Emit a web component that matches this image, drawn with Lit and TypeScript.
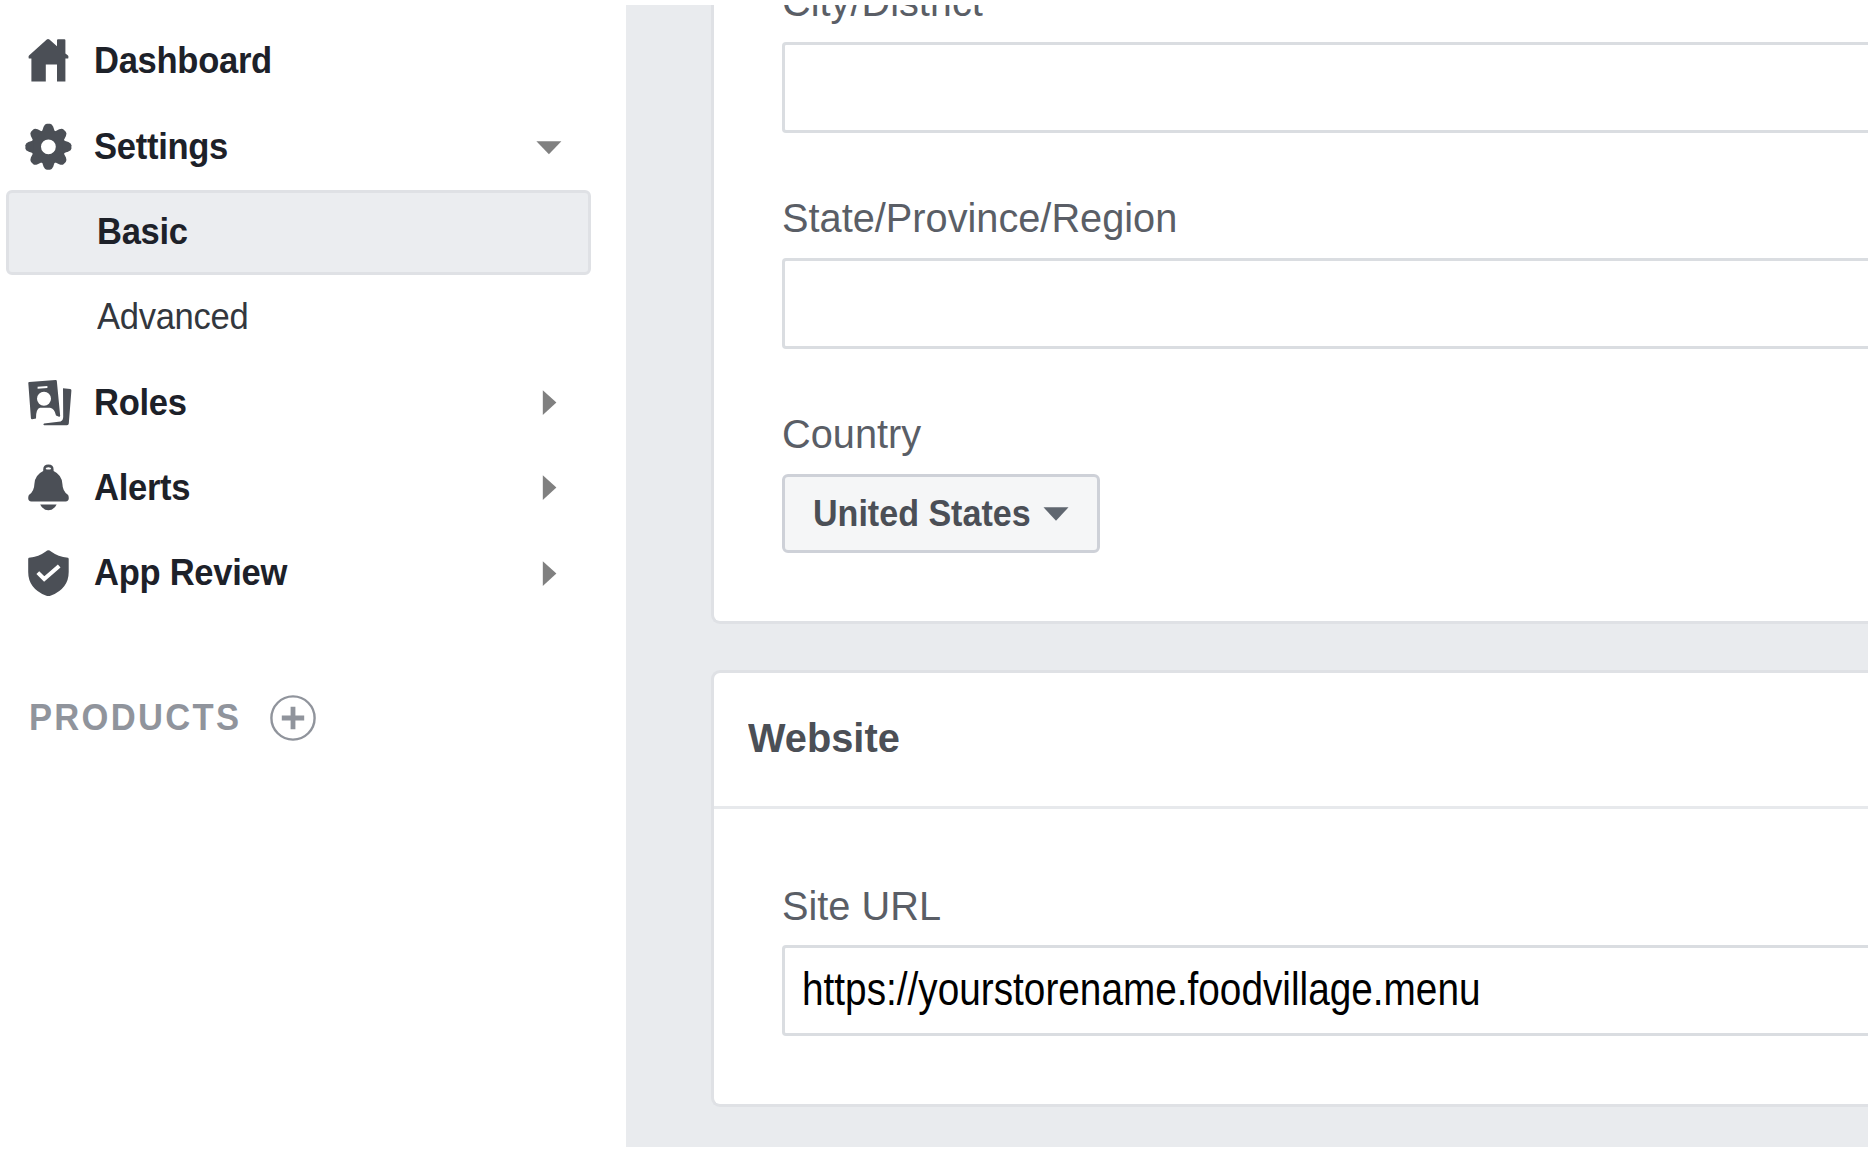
import { LitElement, html, css, svg, nothing, type SVGTemplateResult } from "lit";
import { customElement, property } from "lit/decorators.js";
import { classMap } from "lit/directives/class-map.js";

type Arrow = "down" | "right" | "none";

interface NavItem {
  id: string;
  label: string;
  icon?: string;
  arrow?: Arrow;
  selected?: boolean;
}

const NAV: NavItem[] = [
  { id: "dashboard", label: "Dashboard", icon: "home" },
  { id: "settings", label: "Settings", icon: "gear", arrow: "down" },
  { id: "basic", label: "Basic", selected: true },
  { id: "advanced", label: "Advanced" },
  { id: "roles", label: "Roles", icon: "badge", arrow: "right" },
  { id: "alerts", label: "Alerts", icon: "bell", arrow: "right" },
  { id: "review", label: "App Review", icon: "shield", arrow: "right" },
];

const TEETH = [0, 45, 90, 135, 180, 225, 270, 315];

const ICONS: Record<string, SVGTemplateResult> = {
  home: svg`<path d="M26 3 q.8 0 1.4 .5 L35 10.2 V4.3 q0-1 1-1 H42.4 q1 0 1 1 V17.4 L46 19.6 q.9 1 .2 3 H43.4 V45.4 H35 V28.4 H23.8 V45.4 H9.4 V22.6 H6.8 q-.7-2 .2-3 L24.8 3.4 q.6-.4 1.2-.4Z"/>`,
  gear: svg`<g transform="translate(26.4 25.8)">
      <path fill-rule="evenodd" d="M0-17.2 A17.2 17.2 0 1 1 0 17.2 A17.2 17.2 0 1 1 0-17.2Z M0-7.4 A7.4 7.4 0 1 0 0 7.4 A7.4 7.4 0 1 0 0-7.4Z"/>
      ${TEETH.map((a) => svg`<path transform=${`rotate(${a})`} d="M-6.6-14.5 L-4.8-20 Q-3.4-23-1.6-23 H1.6 Q3.4-23 4.8-20 L6.6-14.5Z"/>`)}
    </g>`,
  badge: svg`<path fill-rule="evenodd" d="M6.3 6 Q6.3 5.2 7.2 5.1 L33.6 2.9 Q34.6 2.8 34.8 3.8 L38.2 39 Q38 40 37 39.8 L34 38.5 Q32.5 31.5 28 30.8 H18 Q13.8 32 14 41.5 L10.2 42.3 Q9 42.4 8.9 41Z M15.6 9.8 L25.4 9 V10.9 L15.6 11.7Z M22 14.8 A7 7 0 1 0 22 28.8 A7 7 0 1 0 22 14.8Z"/>
    <path d="M41 11.2 L48.2 12 Q49.5 12.2 49.4 13.5 L46.8 46.6 Q46.6 48.2 45 48.2 H22 Q20.6 47.6 22 46.6 L38.6 44.4 Q41 43.6 41.2 40Z"/>`,
  bell: svg`<path fill-rule="evenodd" d="M21.2 7.4 Q21.2 2.4 26.4 2.4 Q31.6 2.4 31.6 7.4 V9 Q40 13 40.4 22 Q40.6 29 45.6 32.6 Q46.8 33.6 46.8 36 Q46.8 39.4 43.6 39.4 H9.4 Q6.2 39.4 6.2 36 Q6.2 33.6 7.4 32.6 Q12.2 29 12.4 22 Q12.8 13 21.2 9Z M26.4 5.2 Q23.6 5.2 23.6 7 Q26.4 8.2 29.2 7 Q29.2 5.2 26.4 5.2Z"/>
    <path d="M18.2 42.6 H34.6 Q31.8 48.2 26.4 48.2 Q21 48.2 18.2 42.6Z"/>`,
  shield: svg`<path d="M26.4 2.2 Q27.6 2.2 29 3.6 Q36 8.8 46 9.8 Q46.7 10 46.7 11 V24 Q46.7 40.5 29 47.6 Q26.4 48.6 23.8 47.6 Q6.2 40.5 6.2 24 V11 Q6.2 10 6.9 9.8 Q17 8.8 23.8 3.6 Q25.2 2.2 26.4 2.2Z"/>
    <path class="check" d="M15.8 24.6 L22.2 31 L37.2 18"/>`,
};

@customElement("nav-row")
class NavRow extends LitElement {
  @property({ attribute: false }) item!: NavItem;

  static styles = css`
    :host { display: block; }
    .row {
      box-sizing: border-box;
      display: flex;
      align-items: center;
      height: 85.33px;
      padding: 0 29.5px 0 16px;
    }
    .row.selected {
      background: #ebedf0;
      border: 3px solid #dfe1e5;
      border-radius: 6px;
      padding-left: 13px;
      padding-right: 26px;
    }
    .icon { width: 52px; height: 52px; fill: #4b4f56; flex: none; }
    .check { fill: none; stroke: #fff; stroke-width: 4; }
    .label {
      flex: 1;
      margin-left: 19.8px;
      padding-bottom: 1px;
      font-size: 36px;
      font-weight: 700;
      line-height: 42px;
      letter-spacing: -0.3px;
      color: #1d2129;
      white-space: nowrap;
      transform: scaleX(0.96);
      transform-origin: left center;
    }
    .child .label { margin-left: 75px; }
    .plain .label { font-weight: 400; color: #33373e; }
    .arrow { flex: none; width: 26px; height: 26px; fill: #808080; }
  `;

  render() {
    const { label, icon, arrow, selected } = this.item;
    const classes = { row: true, selected: !!selected, child: !icon, plain: !icon && !selected };
    return html`<div class=${classMap(classes)}>
      ${icon ? html`<svg class="icon" viewBox="0 0 52 52">${ICONS[icon]}</svg>` : nothing}
      <span class="label">${label}</span>
      ${arrow
        ? html`<svg class="arrow" viewBox="0 0 26 26">
            <path d=${arrow === "down" ? "M.4 7.3 H25.4 L12.9 20.3Z" : "M6.8 .2 L20.4 12.5 L6.8 25Z"} />
          </svg>`
        : nothing}
    </div>`;
  }
}

@customElement("text-field")
class TextField extends LitElement {
  @property() label = "";
  @property() value = "";

  static styles = css`
    :host { display: flex; flex-direction: column; gap: 16px; }
    .label {
      font-size: 41px;
      line-height: 48px;
      color: #5a5e66;
      white-space: nowrap;
      transform: scaleX(0.969);
      transform-origin: left center;
    }
    .box {
      box-sizing: border-box;
      display: flex;
      align-items: center;
      height: 91px;
      padding: 0 0 3px 17px;
      background: #fff;
      border: 3px solid #dadde1;
      border-right: 0;
      border-radius: 4px 0 0 4px;
    }
    .value {
      font-size: 47px;
      line-height: 54px;
      color: #000;
      white-space: nowrap;
      transform: scaleX(0.8245);
      transform-origin: left center;
    }
  `;

  render() {
    return html`<span class="label">${this.label}</span>
      <div class="box"><span class="value">${this.value}</span></div>`;
  }
}

@customElement("app-root")
class AppRoot extends LitElement {
  static styles = css`
    :host {
      box-sizing: border-box;
      display: flex;
      width: 1868px;
      height: 1150px;
      padding: 5px 0 3px;
      background: #fff;
      overflow: hidden;
      font-family: "Liberation Sans", Arial, sans-serif;
    }
    .sidebar {
      box-sizing: border-box;
      flex: none;
      width: 626px;
      padding: 14.2px 35px 0 6px;
    }
    .products {
      display: flex;
      align-items: center;
      height: 85px;
      margin-top: 59px;
      padding-left: 22.5px;
    }
    .heading {
      font-size: 36px;
      font-weight: 700;
      line-height: 42px;
      letter-spacing: 2.4px;
      color: #90949c;
      transform: scaleX(0.96);
      transform-origin: left center;
    }
    .add { width: 48px; height: 48px; margin-left: 19.3px; fill: none; stroke: #90949c; }
    .ring { stroke-width: 2.4; }
    .plus { stroke-width: 4.8; }
    .main {
      flex: 1;
      min-width: 0;
      display: flex;
      flex-direction: column;
      justify-content: flex-end;
      gap: 46px;
      padding: 0 0 40px 85px;
      background: #e9ebee;
      overflow: hidden;
    }
    .card {
      flex: none;
      background: #fff;
      border: 3px solid #dfe1e5;
      border-right: 0;
      border-radius: 9px 0 0 9px;
    }
    .fields {
      display: flex;
      flex-direction: column;
      align-items: stretch;
      gap: 61px;
      padding: 0 0 68px 68px;
    }
    .site { padding: 73px 0 68px 68px; }
    .site-field { gap: 15px; }
    .title {
      box-sizing: border-box;
      height: 136px;
      margin: 0;
      padding: 41px 0 0 33.5px;
      border-bottom: 3px solid #e7e9ec;
      font-size: 41px;
      font-weight: 700;
      line-height: 48px;
      color: #4b4f56;
    }
    .title-text {
      display: inline-block;
      transform: scaleX(0.97);
      transform-origin: left center;
    }
    .country { display: flex; flex-direction: column; align-items: flex-start; gap: 16px; }
    .label {
      font-size: 41px;
      line-height: 48px;
      color: #5a5e66;
      transform: scaleX(0.969);
      transform-origin: left center;
    }
    .select {
      box-sizing: border-box;
      display: flex;
      align-items: center;
      width: 318px;
      height: 79px;
      padding: 0 0 0 28px;
      background: #f5f6f7;
      border: 3px solid #ced1d8;
      border-radius: 6px;
      font: inherit;
      font-size: 36px;
      font-weight: 700;
      line-height: 42px;
      color: #4b4f56;
      white-space: nowrap;
    }
    .choice {
      flex: none;
      width: 230px;
      text-align: left;
      transform: scaleX(0.946);
      transform-origin: left center;
    }
    .caret { flex: none; width: 26px; height: 14px; fill: #606770; }
  `;

  render() {
    return html`
      <nav class="sidebar">
        ${NAV.map((item) => html`<nav-row .item=${item}></nav-row>`)}
        <div class="products">
          <span class="heading">PRODUCTS</span>
          <svg class="add" viewBox="0 0 48 48">
            <circle class="ring" cx="24" cy="24" r="21.6" />
            <path class="plus" d="M12.8 24 H35.2 M24 12.8 V35.2" />
          </svg>
        </div>
      </nav>
      <main class="main">
        <section class="card">
          <div class="fields">
            <text-field label="City/District"></text-field>
            <text-field label="State/Province/Region"></text-field>
            <div class="country">
              <span class="label">Country</span>
              <button class="select">
                <span class="choice">United States</span>
                <svg class="caret" viewBox="0 0 26 14"><path d="M.5 .3 H25.5 L13 13.8Z" /></svg>
              </button>
            </div>
          </div>
        </section>
        <section class="card">
          <h2 class="title"><span class="title-text">Website</span></h2>
          <div class="site">
            <text-field class="site-field" label="Site URL" value="https://yourstorename.foodvillage.menu"></text-field>
          </div>
        </section>
      </main>
    `;
  }
}
